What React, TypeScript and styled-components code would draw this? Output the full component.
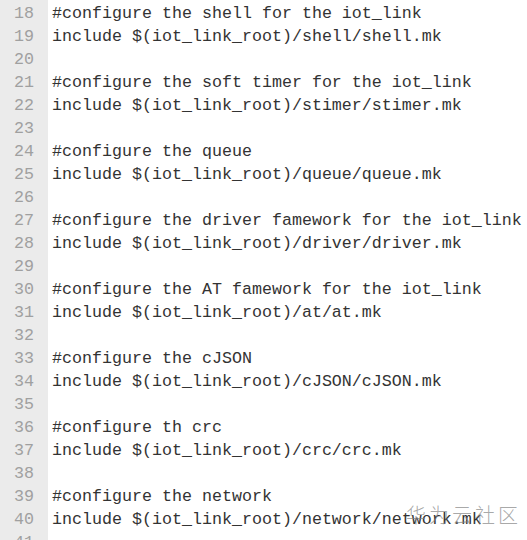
import React from "react";
import styled, { createGlobalStyle } from "styled-components";

const Global = createGlobalStyle`
  html, body { margin: 0; padding: 0; background: #ffffff; overflow: hidden; }
  #root { width: 527px; height: 540px; overflow: hidden; }
`;

const Editor = styled.div`
  position: relative;
  display: flex;
  width: 527px;
  height: 540px;
  overflow: hidden;
  background: #ffffff;
  font-family: "Liberation Mono", "Courier New", monospace;
  font-size: 16.67px;
  line-height: 23px;
`;

const Gutter = styled.div`
  width: 48px;
  flex: none;
  background: #ebebeb;
  padding-top: 2px;
  box-sizing: border-box;
`;

const LineNo = styled.div`
  text-align: right;
  padding-right: 14px;
  color: #a0a0a0;
  height: 23px;
`;

const Code = styled.div`
  flex: 1;
  padding-top: 2px;
  padding-left: 4px;
`;

const Line = styled.div`
  color: #333333;
  height: 23px;
  white-space: pre;
`;

const Watermark = styled.div`
  position: absolute;
  left: 406px;
  top: 503px;
  font-family: "Noto Sans CJK SC", sans-serif;
  font-size: 20px;
  font-weight: 300;
  letter-spacing: 3px;
  color: rgba(130, 130, 130, 0.7);
  white-space: nowrap;
`;

const lines: string[] = [
  "#configure the shell for the iot_link",
  "include $(iot_link_root)/shell/shell.mk",
  "",
  "#configure the soft timer for the iot_link",
  "include $(iot_link_root)/stimer/stimer.mk",
  "",
  "#configure the queue",
  "include $(iot_link_root)/queue/queue.mk",
  "",
  "#configure the driver famework for the iot_link",
  "include $(iot_link_root)/driver/driver.mk",
  "",
  "#configure the AT famework for the iot_link",
  "include $(iot_link_root)/at/at.mk",
  "",
  "#configure the cJSON",
  "include $(iot_link_root)/cJSON/cJSON.mk",
  "",
  "#configure th crc",
  "include $(iot_link_root)/crc/crc.mk",
  "",
  "#configure the network",
  "include $(iot_link_root)/network/network.mk",
  "",
];

export default function App() {
  return (
    <>
      <Global />
      <Editor>
        <Gutter>
          {lines.map((_, i) => (
            <LineNo key={i}>{18 + i}</LineNo>
          ))}
        </Gutter>
        <Code>
          {lines.map((l, i) => (
            <Line key={i}>{l}</Line>
          ))}
        </Code>
        <Watermark>华为云社区</Watermark>
      </Editor>
    </>
  );
}
